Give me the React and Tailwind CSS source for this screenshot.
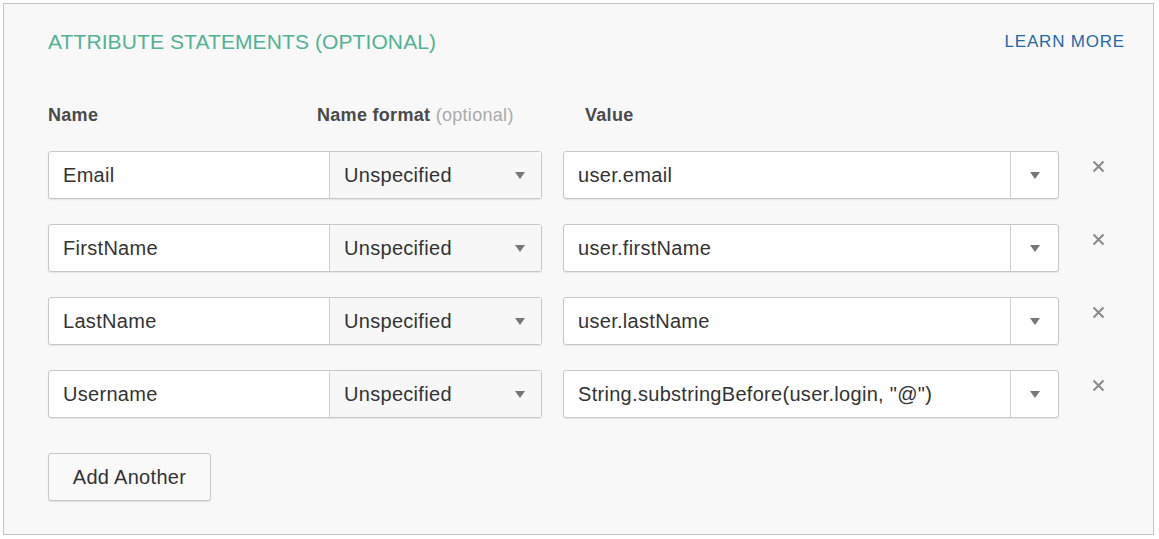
const rows = [
  ["Email", "user.email"],
  ["FirstName", "user.firstName"],
  ["LastName", "user.lastName"],
  ["Username", 'String.substringBefore(user.login, "@")'],
];

const Tri = () => (
  <svg width="10" height="7" viewBox="0 0 10 7"><path d="M0 0h10L5 7z" fill="#777" /></svg>
);

export default function App() {
  return (
    <div className="w-[1159px] h-[539px] bg-white pt-[3px] pl-[3px]" style={{ fontFamily: '"Liberation Sans", Arial, sans-serif' }}>
      <div className="w-[1151px] h-[532px] border border-[#c4c4c4] bg-[#f8f8f8] pl-[44px] pr-[28px] pt-[25px]">
        <div className="flex items-center justify-between h-[26px]">
          <div className="text-[21px] tracking-[0.1px] text-[#52b295]">ATTRIBUTE STATEMENTS (OPTIONAL)</div>
          <div className="text-[17px] text-[#1f6aa8] tracking-[0.8px]">LEARN MORE</div>
        </div>
        <div className="flex mt-[48px] h-[24px] items-center text-[18px] font-bold text-[#4a4a4a] tracking-[0.3px]">
          <div className="w-[269px]">Name</div>
          <div className="w-[268px]">Name format <span className="font-normal text-[#aaa]">(optional)</span></div>
          <div>Value</div>
        </div>
        <div className="mt-[24px] flex flex-col gap-[25px]">
          {rows.map(([n, v]) => (
            <div key={n} className="flex items-center h-[48px] text-[20px] tracking-[0.3px] text-[#333]">
              <div className="flex w-[494px] h-[48px] border border-[#c8c8c8] rounded-[3px] bg-white shadow-[0_1px_1px_rgba(0,0,0,0.08)]">
                <div className="w-[281px] border-r border-[#d0d0d0] flex items-center pl-[14px]">{n}</div>
                <div className="flex-1 bg-[#f7f7f7] flex items-center justify-between pl-[14px] pr-[16px]">
                  <span>Unspecified</span><Tri />
                </div>
              </div>
              <div className="ml-[21px] flex w-[496px] h-[48px] border border-[#c8c8c8] rounded-[3px] bg-white shadow-[0_1px_1px_rgba(0,0,0,0.08)]">
                <div className="flex-1 flex items-center pl-[14px]">{v}</div>
                <div className="w-[48px] border-l border-[#d0d0d0] flex items-center justify-center"><Tri /></div>
              </div>
              <div className="ml-[33px] self-start mt-[9px]">
                <svg width="13" height="13" viewBox="0 0 13 13"><path d="M1.5 1.5l10 10M11.5 1.5l-10 10" stroke="#8a8a8a" strokeWidth="2" /></svg>
              </div>
            </div>
          ))}
        </div>
        <button className="mt-[35px] w-[163px] h-[48px] border border-[#c8c8c8] rounded-[3px] bg-[#f9f9f9] text-[20px] tracking-[0.3px] text-[#333] shadow-[0_1px_1px_rgba(0,0,0,0.1)]">Add Another</button>
      </div>
    </div>
  );
}
